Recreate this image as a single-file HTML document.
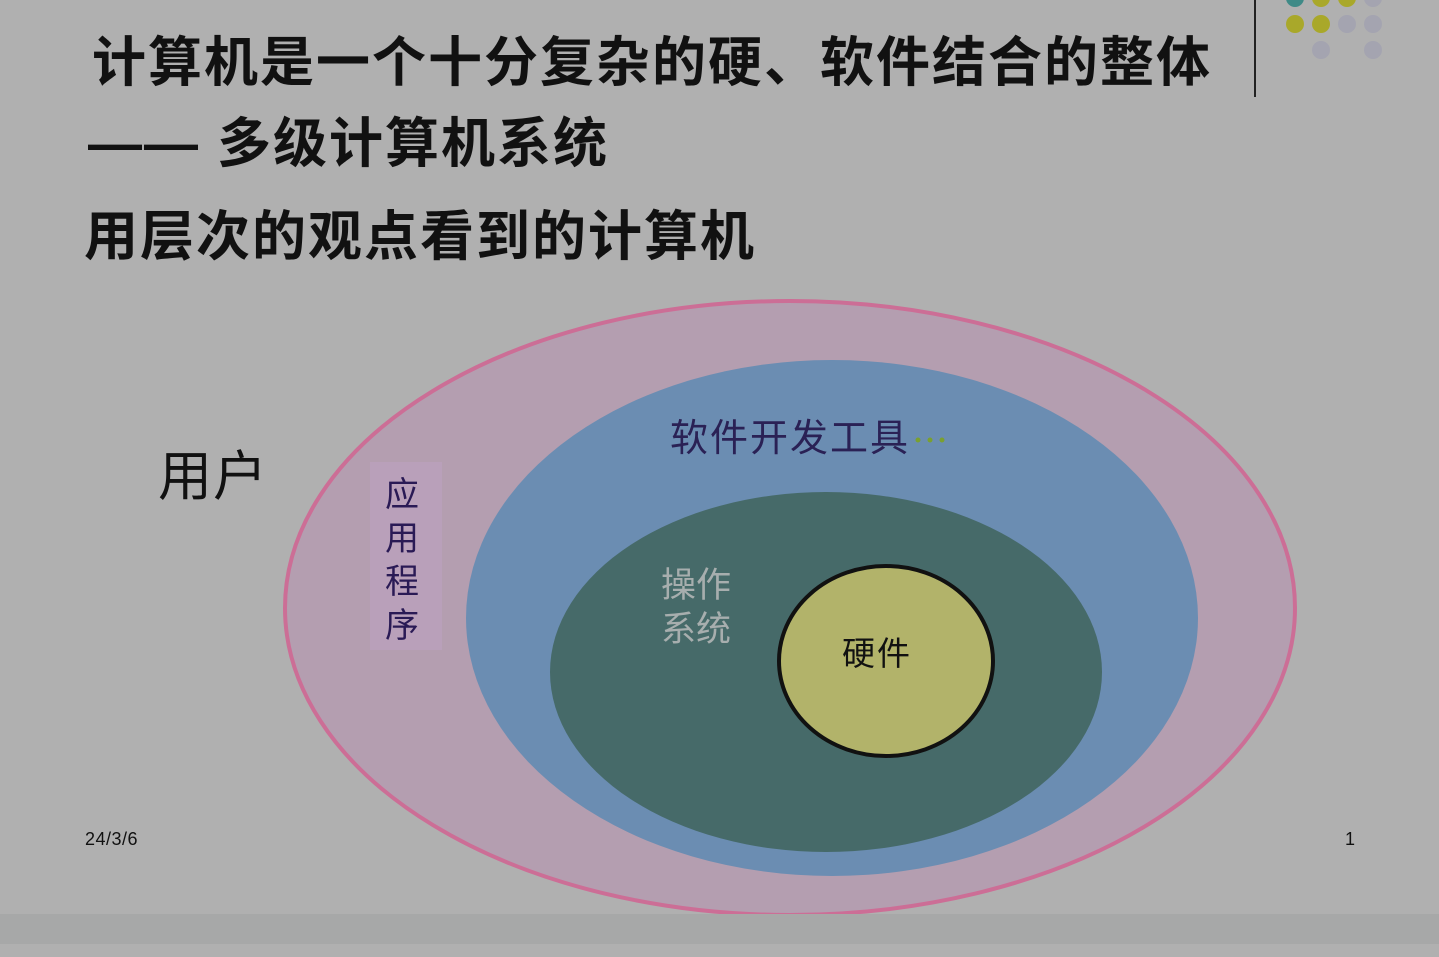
<!DOCTYPE html>
<html><head><meta charset="utf-8"><style>
html,body{margin:0;padding:0;}
body{width:1439px;height:957px;background:#b0b0b0;position:relative;overflow:hidden;font-family:"Liberation Sans","Noto Sans CJK SC",sans-serif;}
.t{position:absolute;font-weight:bold;color:#111;font-size:54px;line-height:1;white-space:nowrap;letter-spacing:2px;}
svg{position:absolute;left:0;top:0;}
</style></head><body>
<svg width="1439" height="957" viewBox="0 0 1439 957">
  <ellipse cx="790" cy="608" rx="505" ry="307" fill="#b49eb0" stroke="#cc6e96" stroke-width="4"/>
  <ellipse cx="832" cy="618" rx="366" ry="258" fill="#6b8db2"/>
  <ellipse cx="826" cy="672" rx="276" ry="180" fill="#466a69"/>
  <ellipse cx="886" cy="661" rx="107" ry="95" fill="#b2b36a" stroke="#111" stroke-width="4"/>
  <rect x="370" y="462" width="72" height="188" fill="#b9a0ba"/>
  <rect x="0" y="914" width="1439" height="30" fill="#a7a8a8"/>
  <line x1="1255" y1="0" x2="1255" y2="97" stroke="#222" stroke-width="2"/>
  <circle cx="1295" cy="-2" r="9" fill="#3f8a87"/>
  <circle cx="1321" cy="-2" r="9" fill="#a9a82a"/>
  <circle cx="1347" cy="-2" r="9" fill="#a9a82a"/>
  <circle cx="1373" cy="-2" r="9" fill="#a4a4b0"/>
  <circle cx="1295" cy="24" r="9" fill="#a9a82a"/>
  <circle cx="1321" cy="24" r="9" fill="#a9a82a"/>
  <circle cx="1347" cy="24" r="9" fill="#a4a4b0"/>
  <circle cx="1373" cy="24" r="9" fill="#a4a4b0"/>
  <circle cx="1321" cy="50" r="9" fill="#a4a4b0"/>
  <circle cx="1373" cy="50" r="9" fill="#a4a4b0"/>
  <circle cx="918" cy="440" r="2.5" fill="#7aa030"/>
  <circle cx="930" cy="440" r="2.5" fill="#7aa030"/>
  <circle cx="942" cy="440" r="2.5" fill="#7aa030"/>
</svg>
<div class="t" style="left:92px;top:36px;">计算机是一个十分复杂的硬、软件结合的整体</div>
<div class="t" style="left:88px;top:117px;">—— 多级计算机系统</div>
<div class="t" style="left:84px;top:210px;">用层次的观点看到的计算机</div>
<div style="position:absolute;left:158px;top:450px;font-size:54px;color:#111;line-height:1;letter-spacing:1px;">用户</div>
<div style="position:absolute;left:385px;top:474px;width:40px;font-size:34px;line-height:43.5px;color:#2a1a55;">应<br>用<br>程<br>序</div>
<div style="position:absolute;left:670px;top:420px;font-size:38px;color:#2a2155;line-height:1;letter-spacing:2px;">软件开发工具</div>
<div style="position:absolute;left:661px;top:564px;font-size:35px;color:#a7aeae;line-height:44px;">操作<br>系统</div>
<div style="position:absolute;left:842px;top:637px;font-size:33px;color:#111;line-height:1;letter-spacing:2px;">硬件</div>
<div style="position:absolute;left:85px;top:829px;font-size:18px;color:#111;letter-spacing:0.5px;">24/3/6</div>
<div style="position:absolute;left:1345px;top:829px;font-size:18px;color:#111;">1</div>
</body></html>
